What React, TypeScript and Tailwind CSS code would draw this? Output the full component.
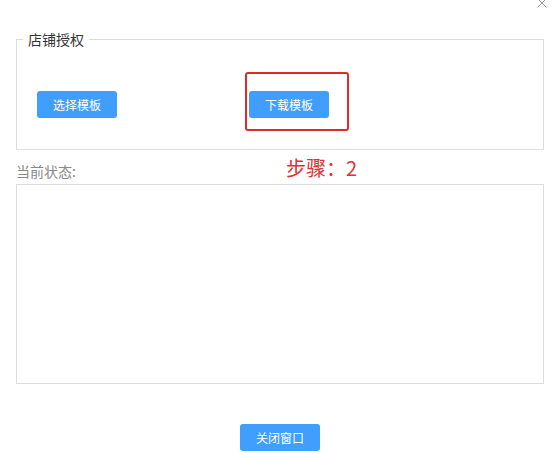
import React from "react";

const font = { fontFamily: '"Noto Sans CJK SC", "Microsoft YaHei", sans-serif' };

function BlueButton({ children }: { children: React.ReactNode }) {
  return (
    <button className="h-[27px] w-[80px] rounded-[3px] bg-[#409eff] text-[12px] leading-[27px] text-white">
      {children}
    </button>
  );
}

export default function App() {
  return (
    <div className="relative min-h-[454px] w-[560px] overflow-hidden bg-white px-4 pt-[31px]" style={font}>
      {/* close icon, scrolled partly out of view */}
      <svg
        className="absolute right-[13px] top-[-2px] h-[10px] w-[10px]"
        viewBox="0 0 10 10"
        fill="none"
        stroke="#999"
        strokeWidth="1"
      >
        <path d="M0.5 0.5 L9.5 9.5 M9.5 0.5 L0.5 9.5" />
      </svg>

      <fieldset className="border border-[#ddd] pb-[31px] pl-[6px] pt-[44px]">
        <legend className="px-[5px] text-[14px] leading-[16px] text-[#333]">店铺授权</legend>
        <div className="flex pl-[14px]">
          <BlueButton>选择模板</BlueButton>
          <div className="relative ml-[132px]">
            <BlueButton>下载模板</BlueButton>
            <div className="pointer-events-none absolute left-[-4px] top-[-19px] h-[59px] w-[104px] rounded-[3px] border-2 border-[#dc2b2b]" />
          </div>
        </div>
      </fieldset>

      <div className="relative mt-[8px] h-[20px]">
        <span className="text-[14px] leading-[20px] text-[#888]">当前状态:</span>
        <span className="absolute left-[270px] top-[-2px] text-[20px] leading-[24px] text-[#e3302f]">步骤：2</span>
      </div>

      <textarea className="mt-[6px] block h-[200px] w-full resize-none border border-[#ddd] outline-none" />

      <div className="mt-[40px] flex justify-center">
        <BlueButton>关闭窗口</BlueButton>
      </div>
    </div>
  );
}
